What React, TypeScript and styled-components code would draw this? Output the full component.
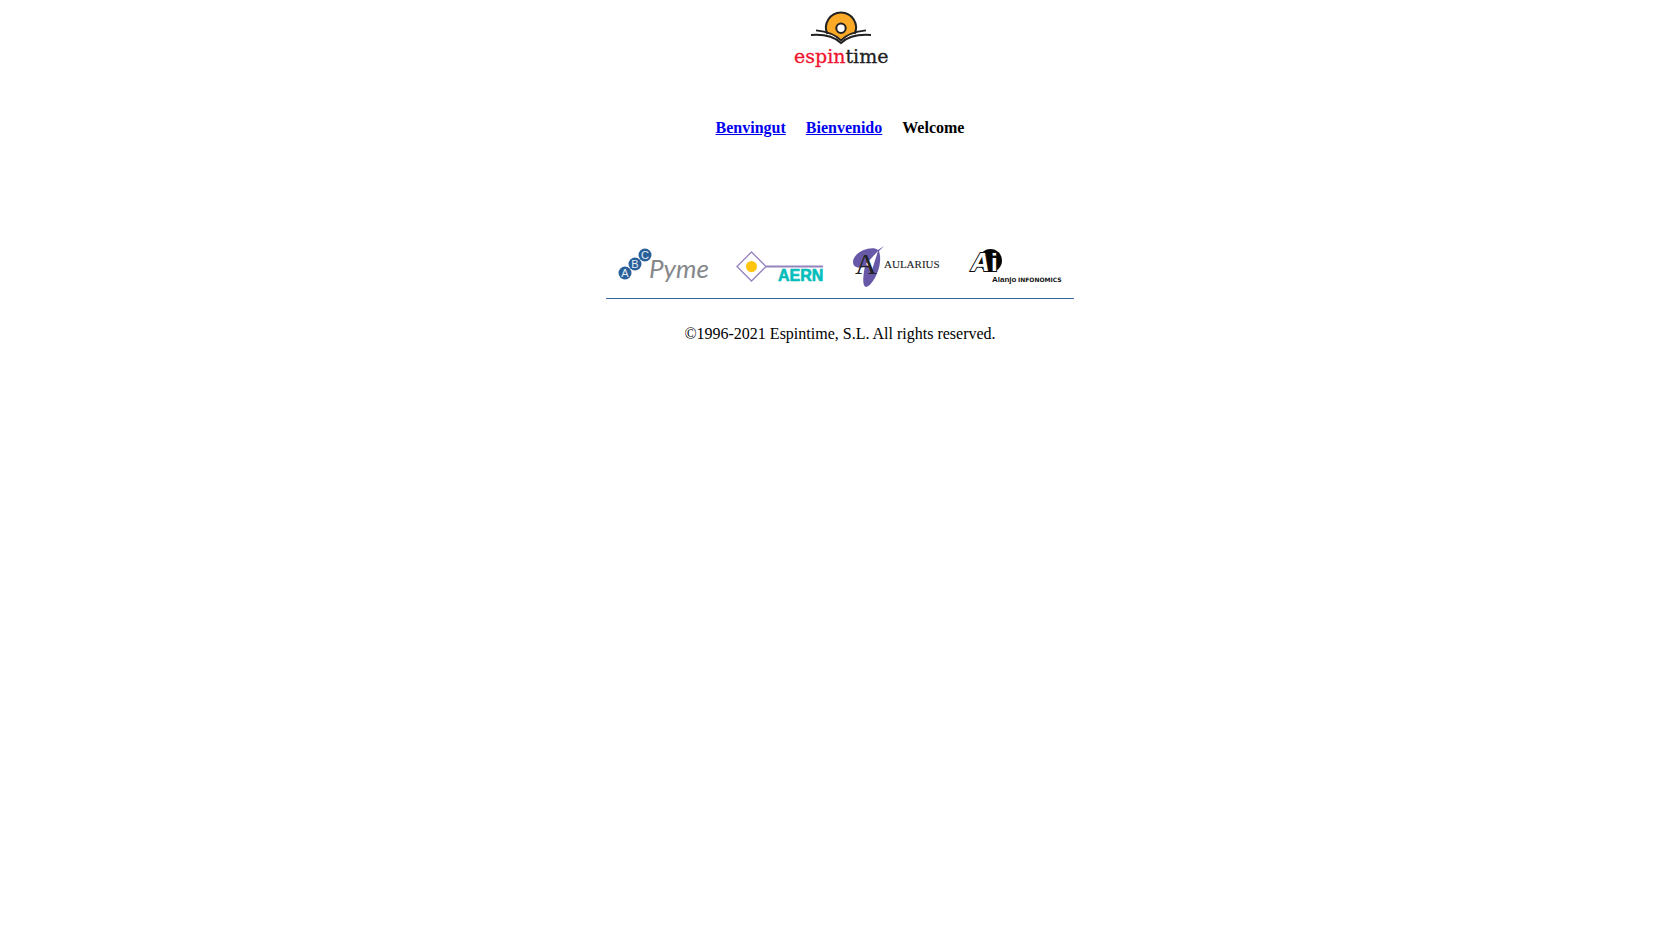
import React from "react";
import styled, { createGlobalStyle } from "styled-components";

const Global = createGlobalStyle`
  body {
    margin: 0;
    background: #fff;
    color: #000;
    font: 16px/18px "Liberation Serif", "Times New Roman", serif;
  }
`;

const Page = styled.main`
  display: flex;
  flex-direction: column;
  align-items: center;
  padding: 8px;
`;

const Brand = styled.svg`
  display: block;
  width: 100px;
  height: 64px;
`;

const Languages = styled.nav`
  display: flex;
  gap: 20px;
  margin-top: 47px;
  font-weight: bold;
`;

const LanguageLink = styled.a`
  color: #0000ee;
  text-decoration: underline;
`;

const Partners = styled.section`
  display: flex;
  margin-top: 103px;
  padding-bottom: 8px;
  border-bottom: 1px solid #336699;
`;

const PartnerLogo = styled.svg`
  display: block;
  width: 117px;
  height: 50px;
`;

const Copyright = styled.footer`
  margin-top: 26px;
`;

const Dot = ({ x, y, letter }: { x: number; y: number; letter: string }) => (
  <g>
    <circle cx={x} cy={y} r="6.5" fill="#2a6099" />
    <text x={x} y={y + 4} fontFamily="Liberation Sans, sans-serif" fontSize="11" fill="#e4edf6" textAnchor="middle">
      {letter}
    </text>
  </g>
);

export default function App() {
  return (
    <>
      <Global />
      <Page>
        <Brand viewBox="0 0 100 64" role="img" aria-label="espintime">
          <path
            d="M37.500 25.500 A15 15 0 1 1 64.500 25.500 Q56 28 51 32.500 Q46 28 37.500 25.500Z"
            fill="#fbaa27"
          />
          <path d="M37.500 26 A15 15 0 1 1 64.500 26" fill="none" stroke="#222" strokeWidth="2" />
          <circle cx="51" cy="20.300" r="4.700" fill="#fff" stroke="#222" strokeWidth="2" />
          <path d="M21 27 Q41 25.500 51 35 Q61 25.500 81 27" fill="none" stroke="#222" strokeWidth="2" />
          <path d="M26 22.300 Q43 24 51 32.300 Q59 24 76 22.300" fill="none" stroke="#222" strokeWidth="1.700" />
          <text x="4" y="55" fontFamily="DejaVu Serif, serif" fontSize="19" fill="#222" stroke="#222" strokeWidth="0.3">
            <tspan fill="#f0142f" stroke="#f0142f">espin</tspan>time
          </text>
        </Brand>
        <Languages aria-label="Language">
          <LanguageLink href="#ca">Benvingut</LanguageLink>
          <LanguageLink href="#es">Bienvenido</LanguageLink>
          <span>Welcome</span>
        </Languages>
        <Partners aria-label="Partners">
          <PartnerLogo viewBox="0 0 117 50" role="img" aria-label="ABC Pyme">
            <Dot x={19} y={33} letter="A" />
            <Dot x={29} y={24} letter="B" />
            <Dot x={39} y={15} letter="C" />
            <text x="43" y="38" fontFamily="Lato, sans-serif" fontStyle="italic" fontSize="26" fill="#85888b">Pyme</text>
          </PartnerLogo>
          <PartnerLogo viewBox="0 0 117 50" role="img" aria-label="AERN">
            <path d="M14 26.500 L28.500 12 L43 26.500 L28.500 41Z" fill="#fff" stroke="#9683bd" strokeWidth="1.300" />
            <path d="M43 26.500H100" stroke="#9683bd" strokeWidth="2" />
            <circle cx="28.500" cy="26.500" r="5.500" fill="#ffc40c" />
            <text x="55" y="41" fontFamily="Liberation Sans, sans-serif" fontWeight="bold" fontSize="16" fill="#04bdbb" stroke="#04bdbb" strokeWidth="0.6">AERN</text>
          </PartnerLogo>
          <PartnerLogo viewBox="0 0 117 50" role="img" aria-label="Aularius">
            <path d="M44 6 L38 10 C32 5 13 12 13 22 C13 28 20 29 25 26 C23 36 22 46 26 47 C32 47 44 26 39 11Z" fill="#6759a7" />
            <path d="M38 11 L26 24 L32 30Z" fill="#fff" />
            <text x="15" y="34" fontFamily="Liberation Serif, serif" fontSize="30" fill="#222">A</text>
            <text x="44" y="28" fontFamily="Liberation Serif, serif" fontSize="11" fill="#222" stroke="#222" strokeWidth="0.1">AULARIUS</text>
          </PartnerLogo>
          <PartnerLogo viewBox="0 0 117 50" role="img" aria-label="Alanjo Infonomics">
            <circle cx="33.500" cy="20.500" r="11.500" fill="#050505" />
            <text x="34" y="31" fontFamily="Liberation Sans, sans-serif" fontWeight="bold" fontSize="24" fill="#fff" stroke="#111" strokeWidth="2" paintOrder="stroke">i</text>
            <text x="14" y="31" fontFamily="Liberation Sans, sans-serif" fontWeight="bold" fontStyle="italic" fontSize="26" fill="#fff" stroke="#111" strokeWidth="2" paintOrder="stroke">A</text>
            <text x="35" y="42" fontFamily="Liberation Sans, sans-serif" fontWeight="bold" fontSize="8" fill="#111">Alanjo</text>
            <text x="61" y="42" fontFamily="DejaVu Sans, sans-serif" fontWeight="bold" fontSize="6" fill="#111">INFONOMICS</text>
          </PartnerLogo>
        </Partners>
        <Copyright>©1996-2021 Espintime, S.L. All rights reserved.</Copyright>
      </Page>
    </>
  );
}
